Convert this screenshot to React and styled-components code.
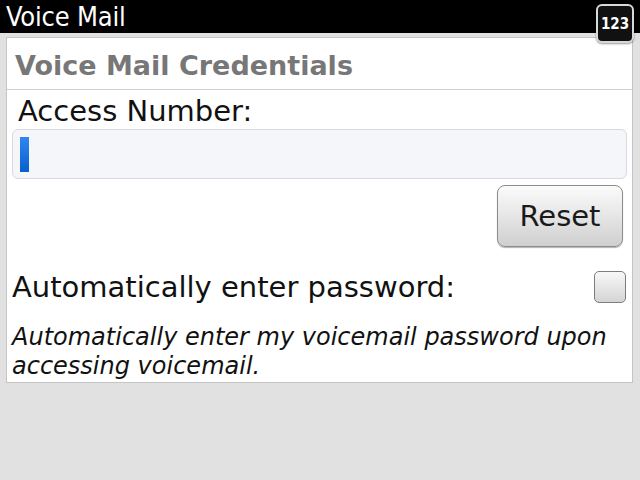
import styled, { createGlobalStyle } from 'styled-components';

const GlobalStyle = createGlobalStyle`
  html, body {
    margin: 0;
    padding: 0;
    background: #e1e1e1;
    font-family: 'DejaVu Sans', 'Liberation Sans', sans-serif;
  }
`;

const Screen = styled.div`
  width: 640px;
  height: 480px;
  position: relative;
  overflow: hidden;
  background: #e1e1e1;
`;

const TitleBar = styled.div`
  height: 33px;
  background: #000000;
  display: flex;
  align-items: center;
  padding-left: 6px;
`;

const TitleText = styled.span`
  color: #ffffff;
  font-family: 'DejaVu Sans Condensed', 'DejaVu Sans', sans-serif;
  font-size: 27px;
  letter-spacing: -0.2px;
`;

const InputBadge = styled.div`
  position: absolute;
  top: 4px;
  right: 6px;
  width: 34px;
  height: 35px;
  border: 2px solid #d8d8d8;
  border-radius: 6px;
  background: #111111;
  color: #ffffff;
  font-family: 'DejaVu Sans Condensed', 'DejaVu Sans', sans-serif;
  font-size: 15px;
  font-weight: bold;
  display: flex;
  align-items: center;
  justify-content: center;
  box-shadow: 0 1px 2px rgba(0, 0, 0, 0.4);
`;

const Card = styled.div`
  margin: 4px 7px 0 6px;
  background: #ffffff;
  border: 1px solid #c4c4c4;
  height: 346px;
  box-sizing: border-box;
`;

const Heading = styled.div`
  color: #777777;
  font-size: 27px;
  font-weight: bold;
  padding: 12px 0 0 8px;
  height: 52px;
  box-sizing: border-box;
  border-bottom: 1px solid #cfcfcf;
`;

const Body = styled.div`
  padding: 0 5px 0 5px;
`;

const FieldLabel = styled.div`
  color: #111111;
  font-size: 29px;
  padding: 4px 0 0 6px;
  height: 39px;
  box-sizing: border-box;
`;

const TextField = styled.div`
  height: 50px;
  box-sizing: border-box;
  border: 1px solid #d8dadf;
  border-radius: 6px;
  background: #f4f6fa;
  display: flex;
  align-items: center;
  padding-left: 7px;
`;

const Caret = styled.div`
  width: 9px;
  height: 35px;
  background: linear-gradient(#2f86f0, #0a5fd0);
`;

const ButtonRow = styled.div`
  display: flex;
  justify-content: flex-end;
  padding: 6px 4px 0 0;
`;

const Button = styled.div`
  width: 126px;
  height: 62px;
  box-sizing: border-box;
  border: 1px solid #8c8c8c;
  border-radius: 8px;
  background: linear-gradient(#fbfbfb, #e8e8e8 45%, #cfcfcf);
  box-shadow: 0 1px 1px rgba(0, 0, 0, 0.3);
  display: flex;
  align-items: center;
  justify-content: center;
  color: #1a1a1a;
  font-size: 29px;
`;

const CheckRow = styled.div`
  display: flex;
  align-items: center;
  justify-content: space-between;
  padding: 23px 1px 0 0;
`;

const CheckLabel = styled.span`
  color: #111111;
  font-size: 29px;
`;

const CheckBox = styled.div`
  width: 32px;
  height: 32px;
  box-sizing: border-box;
  border: 1px solid #7d7d7d;
  border-radius: 5px;
  background: linear-gradient(#f8f8f8, #d4d4d4);
`;

const Note = styled.div`
  color: #111111;
  font-size: 24px;
  font-style: italic;
  line-height: 29px;
  padding: 19px 0 0 0;
`;

export default function App() {
  return (
    <Screen>
      <GlobalStyle />
      <TitleBar>
        <TitleText>Voice Mail</TitleText>
      </TitleBar>
      <InputBadge>123</InputBadge>
      <Card>
        <Heading>Voice Mail Credentials</Heading>
        <Body>
          <FieldLabel>Access Number:</FieldLabel>
          <TextField>
            <Caret />
          </TextField>
          <ButtonRow>
            <Button>Reset</Button>
          </ButtonRow>
          <CheckRow>
            <CheckLabel>Automatically enter password:</CheckLabel>
            <CheckBox />
          </CheckRow>
          <Note>
            Automatically enter my voicemail password upon accessing voicemail.
          </Note>
        </Body>
      </Card>
    </Screen>
  );
}
